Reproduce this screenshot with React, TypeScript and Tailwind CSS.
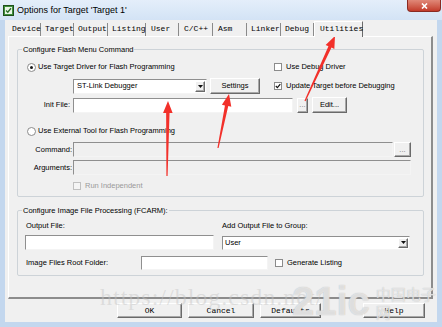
import React from 'react';

const ui = "font-['Liberation_Sans',Arial,sans-serif] text-[7.5px] leading-[10px] text-black";
const mono = "font-['Liberation_Mono','Courier_New',monospace] text-[8px] leading-[10px] text-black";
const sunken = 'border border-t-[#8f8f8f] border-l-[#8f8f8f] border-r-[#f4f4f4] border-b-[#f4f4f4]';
const raised = 'border border-t-white border-l-white border-r-[#6a6a6a] border-b-[#6a6a6a] shadow-[inset_-1px_-1px_0_#a8a8a8] bg-[#f0f0f0]';

const tabs = [
  { name: 'Device', w: 'w-[31px] pl-[2px]' },
  { name: 'Target', w: 'w-[33px] pl-[4px]' },
  { name: 'Output', w: 'w-[34px] pl-[4px]' },
  { name: 'Listing', w: 'w-[38px] pl-[4px]' },
  { name: 'User', w: 'w-[33px] pl-[5px]' },
  { name: 'C/C++', w: 'w-[34px] pl-[5px]' },
  { name: 'Asm', w: 'w-[34px] pl-[5px]' },
  { name: 'Linker', w: 'w-[34px] pl-[4px]' },
  { name: 'Debug', w: 'w-[33px] pl-[4px]' },
];

function Radio({ checked }: { checked?: boolean }) {
  return (
    <span className="w-[9px] h-[9px] rounded-full border border-[#8b8b8b] bg-white flex items-center justify-center shrink-0">
      {checked && <span className="w-[3px] h-[3px] rounded-full bg-[#1a1a1a]" />}
    </span>
  );
}

function Check({ checked, disabled }: { checked?: boolean; disabled?: boolean }) {
  return (
    <span className={`w-[8px] h-[8px] border shrink-0 flex items-center justify-center ${disabled ? 'border-[#c0c0c0] bg-[#f4f4f4]' : 'border-[#8b8b8b] bg-white'}`}>
      {checked && (
        <svg width="6" height="6" viewBox="0 0 6 6">
          <path d="M0.8 3 L2.4 4.6 L5.3 1.2" fill="none" stroke="#111" strokeWidth="1.2" />
        </svg>
      )}
    </span>
  );
}

function DropArrow() {
  return (
    <span className={`w-[10px] h-full flex items-center justify-center ${raised}`}>
      <svg width="5" height="3" viewBox="0 0 5 3"><path d="M0 0 H5 L2.5 3 Z" fill="#111" /></svg>
    </span>
  );
}

function arrowPoints(x1: number, y1: number, x2: number, y2: number) {
  const dx = x2 - x1;
  const dy = y2 - y1;
  const len = Math.hypot(dx, dy);
  const ux = dx / len;
  const uy = dy / len;
  const px = -uy;
  const py = ux;
  const hl = 12;
  const hw = 4.8;
  const sw = 1.7;
  const tw = 0.6;
  const bx = x2 - ux * hl;
  const by = y2 - uy * hl;
  const pts = [
    [x1 + px * tw, y1 + py * tw],
    [bx + px * sw, by + py * sw],
    [bx + px * hw, by + py * hw],
    [x2, y2],
    [bx - px * hw, by - py * hw],
    [bx - px * sw, by - py * sw],
    [x1 - px * tw, y1 - py * tw],
  ];
  return pts.map(p => p.join(',')).join(' ');
}

const arrows = [
  [167, 176, 168, 101],
  [218, 148, 229, 94],
  [305, 101, 335, 36],
];

export default function App() {
  return (
    <div className={`relative w-[442px] h-[327px] overflow-hidden bg-[#c3d7ee] ${ui}`}>
      {/* title bar */}
      <div className="h-[20px] flex items-center bg-gradient-to-b from-[#e4eefa] to-[#d3e3f5]">
        <svg className="ml-[3px]" width="11" height="11" viewBox="0 0 11 11">
          <rect x="0.5" y="0.5" width="10" height="10" fill="#3f8f3a" stroke="#1f4f1c" />
          <rect x="2" y="2" width="7" height="7" fill="#e9f5e6" />
          <path d="M3 5.5 L4.8 7.3 L8 3.2" fill="none" stroke="#2b6d26" strokeWidth="1.4" />
        </svg>
        <span className="ml-[3px] font-['Liberation_Sans',Arial,sans-serif] text-[9px] text-black">Options for Target 'Target 1'</span>
      </div>
      <div className="absolute top-0 right-[1px] w-[34px] h-[12px] rounded-b-[4px] border border-t-0 border-[#8a2a22] bg-gradient-to-b from-[#e08878] to-[#c23a2a] flex items-center justify-center">
        <svg width="7" height="6" viewBox="0 0 7 6"><path d="M1 0.5 L6 5.5 M6 0.5 L1 5.5" stroke="white" strokeWidth="1.6" /></svg>
      </div>

      {/* client area */}
      <div className="ml-[5px] w-[432px] h-[302px] bg-[#f0f0f0]">
        {/* tab strip */}
        <div className={`h-[16px] pl-[5px] flex items-end ${mono}`}>
          {tabs.map(t => (
            <div key={t.name} className={`h-[13px] border-r border-r-[#8a8a8a] pt-[1px] ${t.w}`}>{t.name}</div>
          ))}
          <div className="relative z-10 -mb-[1px] w-[49px] h-[16px] pl-[5px] pt-[2px] border-t border-l border-t-white border-l-white border-r border-r-[#6a6a6a] bg-[#f0f0f0]">Utilities</div>
        </div>

        {/* tab panel */}
        <div className="ml-[3px] w-[425px] h-[263px] border-t border-l border-t-white border-l-white border-r-2 border-b-2 border-r-[#8c8c8c] border-b-[#8c8c8c] pt-[12px]">
          {/* group 1 */}
          <div className="relative ml-[8px] w-[407px] h-[148px] border border-[#cdd3d8] rounded-[2px] pt-[12px]">
            <span className="absolute -top-[5px] left-[4px] px-[1px] bg-[#f0f0f0]">Configure Flash Menu Command</span>

            <div className="flex items-center h-[10px]">
              <div className="ml-[9px] w-[247px] flex items-center gap-[2px]">
                <Radio checked />
                <span>Use Target Driver for Flash Programming</span>
              </div>
              <div className="flex items-center gap-[4px]">
                <Check />
                <span>Use Debug Driver</span>
              </div>
            </div>

            <div className="mt-[6px] flex items-center h-[16px]">
              <div className={`ml-[55px] w-[134px] h-[15px] bg-white flex items-center justify-between pl-[3px] pr-[1px] ${sunken}`}>
                <span>ST-Link Debugger</span>
                <span className="h-[11px]"><DropArrow /></span>
              </div>
              <div className={`ml-[3px] w-[50px] h-[16px] flex items-center justify-center ${raised}`}>Settings</div>
              <div className="ml-[14px] flex items-center gap-[4px]">
                <Check checked />
                <span>Update Target before Debugging</span>
              </div>
            </div>

            <div className="mt-[3px] flex items-center h-[16px]">
              <span className="w-[52px] text-right">Init File:</span>
              <div className={`ml-[3px] w-[220px] h-[15px] bg-white ${sunken}`} />
              <div className={`ml-[4px] w-[11px] h-[15px] flex items-center justify-center text-[#777] ${raised}`}>...</div>
              <div className={`ml-[4px] w-[35px] h-[16px] flex items-center justify-center ${raised}`}>Edit...</div>
            </div>

            <div className="mt-[13px] flex items-center h-[10px]">
              <div className="ml-[9px] flex items-center gap-[2px]">
                <Radio />
                <span>Use External Tool for Flash Programming</span>
              </div>
            </div>

            <div className="mt-[6px] flex items-center h-[15px]">
              <span className="w-[54px] text-right">Command:</span>
              <div className={`ml-[1px] w-[320px] h-[15px] bg-[#f0f0f0] ${sunken}`} />
              <div className={`ml-[1px] w-[17px] h-[15px] flex items-center justify-center text-[#777] ${raised}`}>...</div>
            </div>

            <div className="mt-[3px] flex items-center h-[15px]">
              <span className="w-[54px] text-right">Arguments:</span>
              <div className={`ml-[1px] w-[338px] h-[15px] bg-[#f0f0f0] ${sunken}`} />
            </div>

            <div className="mt-[6px] flex items-center h-[10px]">
              <div className="ml-[55px] flex items-center gap-[4px] text-[#9a9a9a]">
                <Check disabled />
                <span>Run Independent</span>
              </div>
            </div>
          </div>

          {/* group 2 */}
          <div className="relative mt-[13px] ml-[8px] w-[407px] h-[66px] border border-[#cdd3d8] rounded-[2px] pt-[10px]">
            <span className="absolute -top-[5px] left-[4px] px-[1px] bg-[#f0f0f0]">Configure Image File Processing (FCARM):</span>

            <div className="flex h-[10px]">
              <span className="ml-[8px] w-[196px]">Output File:</span>
              <span>Add Output File to Group:</span>
            </div>

            <div className="mt-[4px] flex items-center h-[15px]">
              <div className={`ml-[7px] w-[189px] h-[15px] bg-white ${sunken}`} />
              <div className={`ml-[8px] w-[188px] h-[14px] bg-white flex items-center justify-between pl-[2px] pr-[1px] ${sunken}`}>
                <span>User</span>
                <span className="h-[10px]"><DropArrow /></span>
              </div>
            </div>

            <div className="mt-[6px] flex items-center h-[14px]">
              <span className="ml-[8px] w-[115px]">Image Files Root Folder:</span>
              <div className={`w-[127px] h-[14px] bg-white ${sunken}`} />
              <div className="ml-[7px] flex items-center gap-[4px]">
                <Check />
                <span>Generate Listing</span>
              </div>
            </div>
          </div>
        </div>

        {/* dialog buttons */}
        <div className={`mt-[4px] flex h-[15px] ${mono}`}>
          <div className={`ml-[112px] w-[65px] h-[15px] flex items-center justify-center ${raised}`}>OK</div>
          <div className={`ml-[6px] w-[66px] h-[15px] flex items-center justify-center ${raised}`}>Cancel</div>
          <div className={`ml-[6px] w-[61px] h-[15px] flex items-center justify-center ${raised}`}>Defaults</div>
          <div className={`ml-[42px] w-[62px] h-[15px] flex items-center justify-center ${raised}`}>Help</div>
        </div>
      </div>

      {/* watermarks */}
      <div className="absolute left-[100px] top-[292px] font-['Liberation_Serif',serif] text-[24px] tracking-[1px] text-[#c4c4c4]/45 pointer-events-none">https://blog.csdn.net/</div>
      <div className="absolute left-[292px] top-[279px] flex items-start gap-[6px] pointer-events-none">
        <span className="font-['Liberation_Sans',Arial,sans-serif] font-bold text-[40px] leading-[44px] text-white/60 [text-shadow:0_0_1px_#b0b0b0]">21ic</span>
        <span className="mt-[6px] font-['Noto_Sans_CJK_SC',sans-serif] text-[15px] leading-[18px] text-white/60 [text-shadow:0_0_1px_#b0b0b0]">中国电子网</span>
      </div>

      {/* red annotation arrows */}
      <svg className="absolute inset-0 pointer-events-none" width="442" height="327">
        {arrows.map((a, i) => (
          <polygon key={i} points={arrowPoints(a[0], a[1], a[2], a[3])} fill="#f2302a" />
        ))}
      </svg>
    </div>
  );
}
